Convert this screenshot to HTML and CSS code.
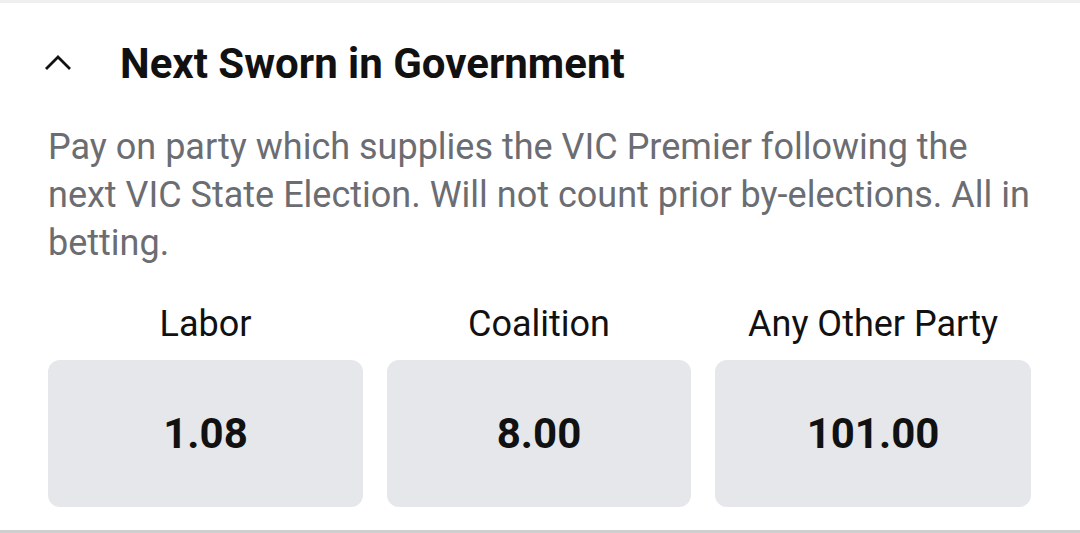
FILE: index.html
```html
<!DOCTYPE html>
<html lang="en">
<head>
    <meta charset="UTF-8">
    <meta name="viewport" content="width=device-width, initial-scale=1.0">
    <title>Next Sworn in Government</title>
    <link rel="stylesheet" href="styles.css">
</head>
<body>
    <div class="market">
        <div class="market-header">
            <svg class="chevron" width="28" height="16" viewBox="0 0 28 16">
                <polyline points="2,14 14,2 26,14" fill="none" stroke="#111" stroke-width="2.8"/>
            </svg>
            <h2 class="market-title">Next Sworn in Government</h2>
        </div>

        <p class="market-desc">Pay on party which supplies the VIC Premier following the next VIC State Election. Will not count prior by-elections. All in betting.</p>

        <!-- Opcoes de aposta -->
        <div class="odds">
            <div class="odd">
                <span class="odd-name">Labor</span>
                <button class="odd-price">1.08</button>
            </div>
            <div class="odd">
                <span class="odd-name">Coalition</span>
                <button class="odd-price">8.00</button>
            </div>
            <div class="odd">
                <span class="odd-name">Any Other Party</span>
                <button class="odd-price">101.00</button>
            </div>
        </div>
    </div>
</body>
</html>
```

FILE: styles.css
```css
body {
    margin: 0;
    font-family: Roboto, "Noto Sans", sans-serif;
    background-color: white;
}
.market {
    border-top: 3px solid #efefef;
    border-bottom: 3px solid #cfcfcf;
    padding: 0 40px 0 48px;
    height: 527px;
    box-sizing: content-box;
}
.market-header {
    display: flex;
    align-items: center;
    height: 120px;
}
.chevron {
    margin-left: -4px;
    margin-right: 48px;
}
.market-title {
    margin: 0;
    font-size: 42px;
    font-weight: bold;
    color: #111;
}
.market-desc {
    margin: 0;
    font-size: 36px;
    line-height: 48px;
    color: #6b6d72;
}
.odds {
    display: grid;
    grid-template-columns: 315px 304px 316px;
    column-gap: 24px;
    margin-top: 33px;
}
.odd {
    display: flex;
    flex-direction: column;
    align-items: center;
}
.odd-name {
    font-size: 36px;
    line-height: 48px;
    color: #111;
    margin-bottom: 12px;
}
.odd-price {
    width: 100%;
    height: 147px;
    border: none;
    border-radius: 12px;
    background-color: #e5e7eb;
    font-family: Roboto, "Noto Sans", sans-serif;
    font-size: 42px;
    font-weight: bold;
    color: #111;
    cursor: pointer;
}
```
